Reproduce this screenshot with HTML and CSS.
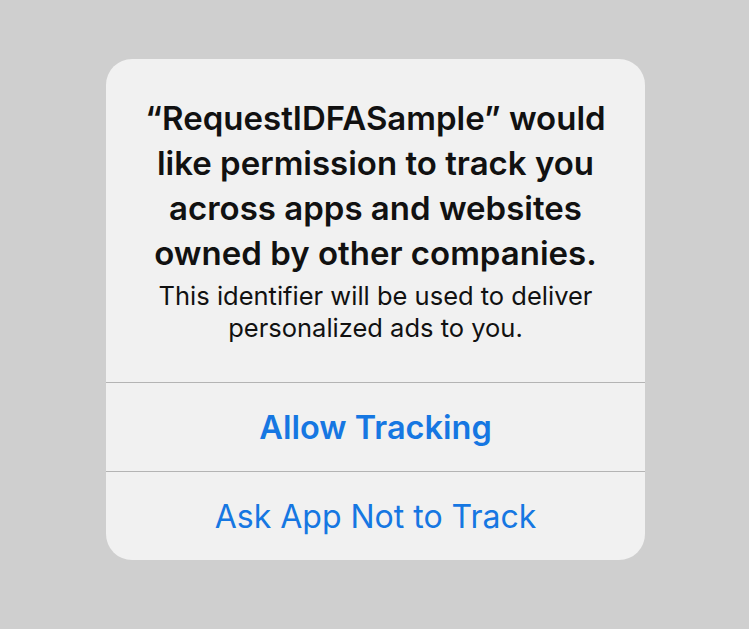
FILE: index.html
```html
<!DOCTYPE html>
<html>
<head>
<meta charset="utf-8">
<link rel="stylesheet" href="styles.css">
</head>
<body>
<div class="screen">
  <div class="alert">
    <div class="content">
      <div class="title">“RequestIDFASample” would like permission to track you across apps and websites owned by other companies.</div>
      <div class="message">This identifier will be used to deliver personalized ads to you.</div>
    </div>
    <div class="button primary">Allow Tracking</div>
    <div class="button">Ask App Not to Track</div>
  </div>
</div>
</body>
</html>
```
FILE: styles.css
```css
html, body {
  margin: 0;
  padding: 0;
  background: #cfcfcf;
}
.screen {
  width: 749px;
  height: 629px;
  display: flex;
  justify-content: center;
  padding-top: 59px;
  padding-left: 2px;
  box-sizing: border-box;
}
.alert {
  width: 539px;
  height: 501px;
  background: #f1f1f1;
  border-radius: 26px;
  display: flex;
  flex-direction: column;
  overflow: hidden;
  font-family: Inter, "Liberation Sans", sans-serif;
  text-align: center;
}
.content {
  padding: 37px 20px 0;
  height: 324px;
  box-sizing: border-box;
  border-bottom: 1px solid #b4b4b4;
}
.title {
  font-size: 33px;
  font-weight: 600;
  line-height: 45px;
  color: #111;
  padding: 0 14px;
}
.message {
  margin-top: 4px;
  font-size: 25.5px;
  line-height: 32px;
  color: #111;
}
.button {
  height: 88px;
  display: flex;
  align-items: center;
  justify-content: center;
  font-size: 32px;
  color: #1677e2;
}
.button.primary {
  font-weight: 600;
  font-size: 32.5px;
  border-bottom: 1px solid #b4b4b4;
}
```
